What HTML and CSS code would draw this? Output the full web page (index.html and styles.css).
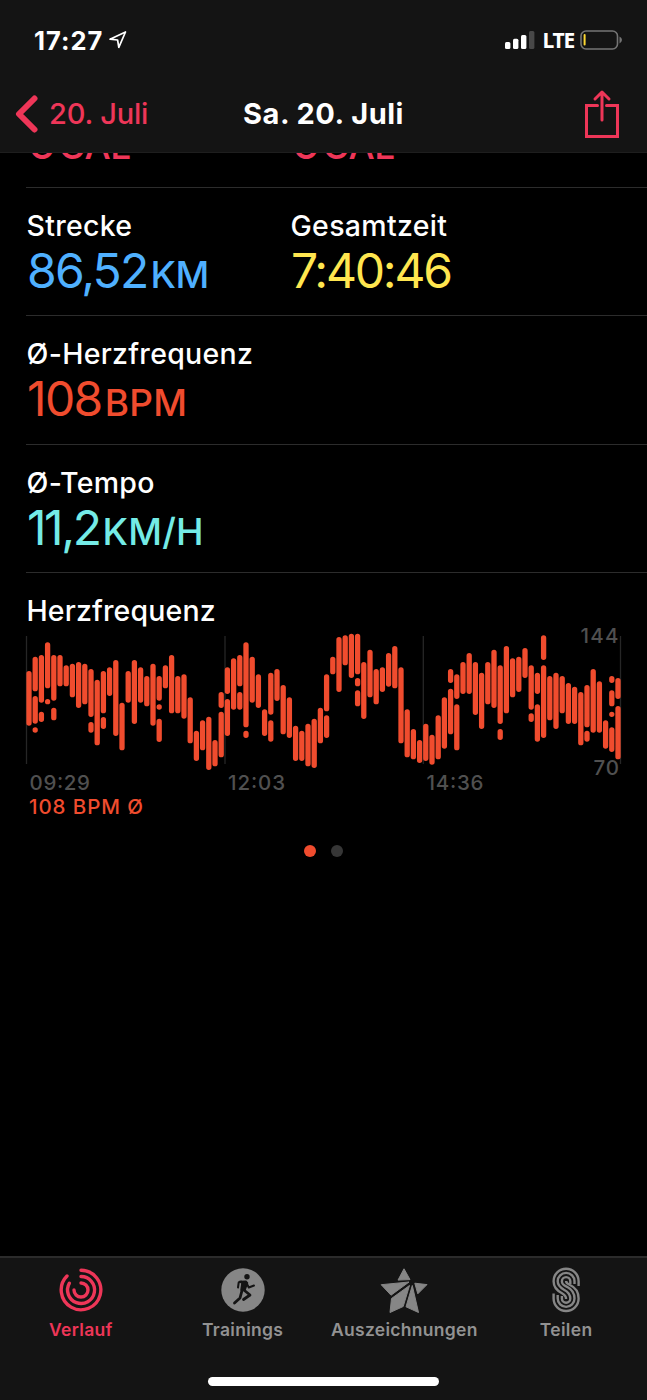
FILE: index.html
```html
<!DOCTYPE html>
<html lang="de">
<head>
  <meta charset="utf-8">
  <title>Sa. 20. Juli</title>
  <link rel="stylesheet" href="styles.css">
</head>
<body>
<div class="phone">

  <div class="header">
    <div class="status">
      <div class="clock">
        <span class="time">17:27</span>
        <svg width="20" height="20" viewBox="0 0 20 20"><path d="M2 9.2L17.5 2L10.8 17.3L9.6 10Z" fill="none" stroke="#fff" stroke-width="1.7" stroke-linejoin="round"/></svg>
      </div>
      <div class="signal">
        <svg width="30" height="20" viewBox="0 0 30 20">
          <rect x="0" y="12" width="5.4" height="7" rx="1.5" fill="#fff"/>
          <rect x="8" y="8.7" width="5.4" height="10.3" rx="1.5" fill="#fff"/>
          <rect x="16" y="5" width="5.4" height="14" rx="1.5" fill="#fff"/>
          <rect x="24" y="1" width="5.4" height="18" rx="1.5" fill="#484848"/>
        </svg>
        <span class="lte">LTE</span>
        <svg width="43" height="20" viewBox="0 0 43 20">
          <rect x="1" y="1" width="36.5" height="18" rx="5" fill="none" stroke="#747474" stroke-width="1.6"/>
          <rect x="3.6" y="4" width="2" height="11.5" rx="1" fill="#fcd732"/>
          <path d="M39.5 6.6Q42 8 42 10T39.5 13.4Z" fill="#747474"/>
        </svg>
      </div>
    </div>
    <div class="nav">
      <div class="back">
        <svg width="24" height="38" viewBox="0 0 24 38"><path d="M19.5 3.5L4 19L19.5 34.5" fill="none" stroke="#ee3658" stroke-width="6" stroke-linecap="round" stroke-linejoin="round"/></svg>
        <span class="backText">20. Juli</span>
      </div>
      <div class="title">Sa. 20. Juli</div>
      <svg class="share" width="36" height="50" viewBox="0 0 36 50" fill="none" stroke="#ee3658" stroke-width="3" stroke-linecap="round">
        <path d="M13.5 16.5H2.5V47.5H33.5V16.5H22.5"/>
        <path d="M18 31V3.2M11 10L18 3L25 10" stroke-linejoin="round"/>
      </svg>
    </div>
  </div>

  <div class="content">
    <div class="row cut">
      <p class="value pink">0<span>CAL</span></p>
      <p class="value pink">0<span>CAL</span></p>
    </div>
    <div class="row">
      <div class="cell"><p class="label">Strecke</p><p class="value blue">86,52<span>KM</span></p></div>
      <div class="cell"><p class="label">Gesamtzeit</p><p class="value yellow">7:40:46</p></div>
    </div>
    <div class="row">
      <div class="cell"><p class="label">Ø-Herzfrequenz</p><p class="value red">108<span>BPM</span></p></div>
    </div>
    <div class="row">
      <div class="cell"><p class="label">Ø-Tempo</p><p class="value cyan">11,2<span>KM/H</span></p></div>
    </div>

    <div class="heart">
      <p class="label">Herzfrequenz</p>
      <svg class="chart" width="647" height="192" viewBox="0 8 647 192">
        <path class="grid" d="M26.5 16V144M225 16V144M423.3 16V144M620.5 16V144"/>
        <path class="bars" id="bars"/>
        <text class="axis" x="580.5" y="23" textLength="38">144</text>
        <text class="axis" x="593.5" y="155" textLength="25.5">70</text>
        <text class="axis" x="29.5" y="170" textLength="60.5">09:29</text>
        <text class="axis" x="228" y="170" textLength="57">12:03</text>
        <text class="axis" x="426.5" y="170" textLength="57">14:36</text>
        <text class="average" x="29" y="194" textLength="114">108 BPM Ø</text>
      </svg>
      <div class="dots"><i class="dot on"></i><i class="dot"></i></div>
    </div>
  </div>

  <div class="footer">
    <div class="tabs">
      <div class="tab active">
        <svg width="48" height="48" viewBox="0 0 48 48" fill="none" stroke="#ee3658" stroke-width="3.4" stroke-linecap="round">
          <path d="M24 4.2A19.8 19.8 0 1 1 10 10"/>
          <path d="M24 10.5A13.5 13.5 0 1 1 12.4 17.2"/>
          <path d="M24 17A7 7 0 1 1 17 24"/>
        </svg>
        <span>Verlauf</span>
      </div>
      <div class="tab">
        <svg width="48" height="48" viewBox="0 0 48 48">
          <circle cx="24" cy="24" r="21.7" fill="#868686"/>
          <circle cx="28" cy="10.8" r="2.7" fill="#141414"/>
          <path d="M20.5 15.5L27 15.2L28.5 17L25.8 24.5L22 24L23 17Z" fill="#141414" stroke="#141414" stroke-width="1.5" stroke-linejoin="round"/>
          <path d="M22 15.6L19.7 16.5L19 21.5M27.5 17L29.8 21.5L35 19.5" fill="none" stroke="#141414" stroke-width="2" stroke-linecap="round" stroke-linejoin="round"/>
          <path d="M25.5 24.5L31 29L24.5 33.5M23 24.5L21 32L15.5 37" fill="none" stroke="#141414" stroke-width="2.8" stroke-linecap="round" stroke-linejoin="round"/>
        </svg>
        <span>Trainings</span>
      </div>
      <div class="tab">
        <svg width="48" height="48" viewBox="0 0 48 48" fill="#868686" stroke="#868686" stroke-width="1" stroke-linejoin="round">
          <path d="M24 2.8L30 13.6L18 14.1Z"/>
          <path d="M1.2 18.7L29 16L11 29.2Z"/>
          <path d="M34.8 17.2L47 18.6L37.8 27.8Z"/>
          <path d="M29.5 19.5L23.2 40.5L10 46.5L11.5 32.5Z"/>
          <path d="M32.3 19.5L38.5 46.5L26 40.8Z"/>
        </svg>
        <span>Auszeichnungen</span>
      </div>
      <div class="tab">
        <svg width="48" height="48" viewBox="0 0 48 48" fill="none" stroke="#868686" stroke-width="2.4">
          <path d="M36.6 20V15.3A12.5 12.5 0 0 0 11.6 15.3C11.6 22 15.5 25 20 27.3C23 29 24.1 30 24.1 33"/>
          <path d="M32.5 18V15.3A8.4 8.4 0 0 0 15.7 15.3C15.7 20 19 22 22 23.7C26.5 26 28.3 28.5 28.3 32.5A4.2 4.2 0 0 1 19.9 32.5V30"/>
          <path d="M28.3 18V15.3A4.2 4.2 0 0 0 19.9 15.3C19.9 18 21 19 25 20.8C30 23.5 32.5 27 32.5 32.5A8.4 8.4 0 0 1 15.7 32.5V29"/>
          <path d="M24.1 15C24.1 17 25 17.5 28 19C33.5 21.5 36.6 26 36.6 32.5A12.5 12.5 0 0 1 11.6 32.5V27.5"/>
        </svg>
        <span>Teilen</span>
      </div>
    </div>
    <div class="homeBar"></div>
  </div>

</div>
<script src="chart.js"></script>
</body>
</html>
```

FILE: styles.css
```css
body {
  margin: 0;
  background: #000;
  color: #fff;
  font-family: Inter, "Liberation Sans", sans-serif;
}
p { margin: 0; }
svg { display: block; flex: none; }
.phone {
  display: flex;
  flex-direction: column;
  width: 647px;
  height: 1400px;
  overflow: hidden;
}

/* header */
.header {
  box-sizing: border-box;
  height: 153px;
  background: #141414;
  border-bottom: 1px solid #1e1e1e;
}
.status {
  display: flex;
  justify-content: space-between;
  height: 80px;
  padding: 0 24px 0 34px;
  align-items: center;
}
.clock, .signal { display: flex; align-items: center; }
.clock { gap: 5px; }
.time { font-size: 25.5px; font-weight: 700; letter-spacing: 1px; }
.lte {
  margin: 0 6px 0 7px;
  font: 700 21px/20px "Noto Sans", sans-serif;
  letter-spacing: -1.2px;
}
.nav {
  display: grid;
  grid-template-columns: 1fr auto 1fr;
  align-items: center;
  height: 68px;
  padding: 0 27px;
}
.back { display: flex; align-items: center; gap: 10px; margin-left: -12px; }
.backText {
  padding-bottom: 2px;
  color: #ee3658;
  font-size: 29px;
  font-weight: 500;
  letter-spacing: -0.2px;
}
.title {
  padding-bottom: 2px;
  font-size: 29px;
  font-weight: 700;
  letter-spacing: 0.5px;
}
.share { justify-self: end; }

/* workout values */
.content { flex: 1; overflow: hidden; }
.row {
  box-sizing: border-box;
  display: grid;
  grid-template-columns: 264px 1fr;
  height: 128.5px;
  margin-left: 26px;
  padding-top: 21px;
  border-bottom: 1px solid #2c2c2c;
}
/* scrolled halfway under the header */
.cut { height: 73.5px; margin-top: -39px; padding-top: 0; }
.label {
  padding-left: 0.5px;
  font-size: 28.5px;
  font-weight: 500;
  line-height: 34px;
  letter-spacing: 0.3px;
}
.value {
  padding-left: 1px;
  font-size: 48px;
  line-height: 55px;
  letter-spacing: -1.8px;
  white-space: nowrap;
}
.value span {
  margin-left: 3px;
  font-size: 37px;
  font-weight: 500;
  letter-spacing: -0.4px;
}
.pink { color: #ee3658; }
.blue { color: #4fb0ff; }
.yellow { color: #ffe64f; letter-spacing: -2.2px; }
.red { color: #f04c2e; letter-spacing: -1.6px; }
.cyan { color: #74ebe6; letter-spacing: -2.4px; }
.red span, .cyan span { letter-spacing: 0.2px; }

/* heart rate chart */
.heart { padding-top: 21px; }
.heart .label { padding-left: 26.5px; letter-spacing: 0.15px; }
.grid { stroke: #262626; stroke-width: 1.3; }
.bars { stroke: #f04c2e; stroke-width: 5.3; stroke-linecap: round; }
.axis, .average { font-size: 20.5px; font-weight: 500; }
.axis { fill: #505050; }
.average { fill: #f04c2e; }
.dots { display: flex; justify-content: center; gap: 15px; margin-top: 25px; }
.dot { width: 12px; height: 12px; border-radius: 50%; background: #363636; }
.on { background: #f04c2e; }

/* tab bar */
.footer {
  box-sizing: border-box;
  height: 144px;
  background: #141414;
  border-top: 2px solid #2b2b2b;
}
.tabs {
  box-sizing: border-box;
  display: grid;
  grid-template-columns: repeat(4, 1fr);
  height: 119px;
  padding-top: 7.5px;
}
.tab {
  display: flex;
  flex-direction: column;
  align-items: center;
  color: #929292;
  font-size: 17.5px;
  font-weight: 600;
  line-height: 22px;
  letter-spacing: 0.3px;
}
.tab span { margin-top: 5.5px; }
.active { color: #ee3658; }
.homeBar {
  width: 231px;
  height: 9px;
  margin: 0 auto;
  border-radius: 5px;
  background: #fff;
}
```

FILE: chart.js
```js
// heart rate ranges per bar, top and bottom in thirds of a pixel
var ranges = [
  [153,317], [110,214,228,311,322,338], [105,248,275,306], [67,205,237,253],
  [105,242,263,301], [105,199], [136,199], [131,232], [126,264], [131,253],
  [147,291,306,338], [179,376], [153,280,291,327], [142,228], [120,348],
  [248,391], [153,248], [120,312], [142,248], [168,259], [131,317],
  [168,242,253,269,296,366], [136,205], [105,280], [168,280], [163,296],
  [232,370], [332,423], [301,391], [290,450], [360,439], [216,264,275,412],
  [142,222,237,348], [115,269], [105,199,216,269], [67,322,332,354],
  [110,248], [163,264], [268,348], [158,284,301,365], [147,243], [195,343],
  [232,354], [317,423], [332,423], [311,439], [296,444], [263,370],
  [163,274,286,354], [110,163], [51,216], [46,136], [41,174],
  [41,163,174,199,211,259], [126,297], [89,232], [147,253], [142,216],
  [99,200], [78,205], [142,370], [268,412], [327,418], [360,429], [311,423],
  [344,434], [286,418], [232,386], [147,189,206,343], [163,237,253,391],
  [126,222], [99,222], [126,285], [158,327], [126,253], [89,264],
  [136,312,327,360], [78,280], [115,232], [110,216], [84,174],
  [136,269,280,306], [158,222,253,365], [46,120,136,354], [168,301],
  [158,327], [168,280], [189,312], [200,312], [216,376], [195,322,332,365],
  [147,338], [184,338], [301,386], [168,189,211,259,275,291,322,396],
  [174,237,258,418]
];
var cap = 2.65;
var d = '';

for (var i = 0; i < ranges.length; i++) {
  var x = 29 + i * 6.2;
  for (var j = 0; j < ranges[i].length; j += 2) {
    var y1 = ranges[i][j] / 3 + cap;
    var y2 = Math.max(ranges[i][j + 1] / 3 - cap, y1 + 0.01);
    d += 'M' + x.toFixed(2) + ' ' + y1.toFixed(2) + 'V' + y2.toFixed(2);
  }
}
document.getElementById('bars').setAttribute('d', d);
```
